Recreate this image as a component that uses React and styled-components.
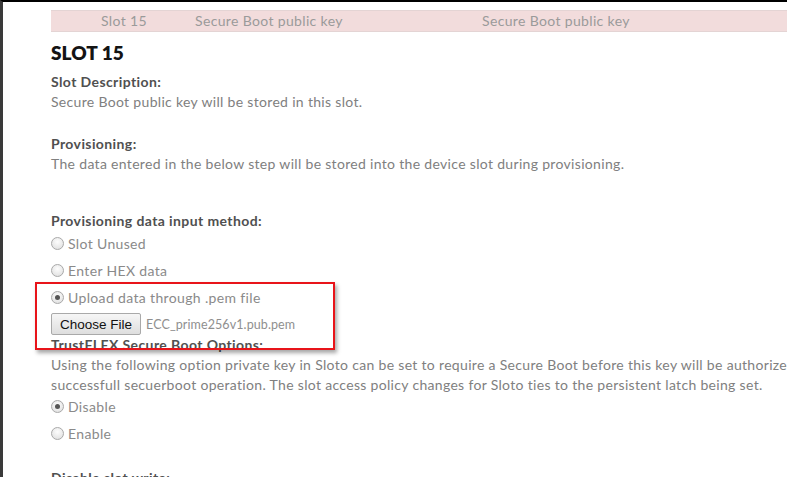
import React from "react"
import styled, { createGlobalStyle } from "styled-components"

const GlobalStyle = createGlobalStyle`
  html, body {
    margin: 0;
    padding: 0;
    background: #fff;
    overflow: hidden;
  }
  body {
    font-family: "Lato", "Open Sans", sans-serif;
  }
`

const Frame = styled.div`
  position: relative;
  height: 477px;
  box-sizing: border-box;
  border-top: 2px solid #000;
  border-left: 3px solid #3a3a3a;
  overflow: hidden;
`

const Content = styled.div`
  width: 900px;
  padding-left: 48px;
`

const SlotRow = styled.div`
  display: grid;
  grid-template-columns: 50px 94px 287px 1fr;
  height: 20px;
  margin-top: 8px;
  background: #f2dcdc;
  border-top: 1px solid #e4d4d4;
  border-bottom: 1px solid #e4d4d4;
  color: #9a9a9a;
  font-size: 14px;
  letter-spacing: 0.35px;
  line-height: 20px;
`

const Cell = styled.div`
  white-space: nowrap;
`

const Heading = styled.h2`
  margin: 9px 0 0;
  font-size: 19px;
  font-weight: 800;
  color: #141414;
  line-height: 24px;
`

const Label = styled.div`
  margin-top: ${p => p.$gap || 0}px;
  font-size: 14px;
  font-weight: 700;
  letter-spacing: 0.4px;
  color: #505050;
  line-height: 20px;
`

const Text = styled.p`
  margin: 0;
  font-size: 14px;
  letter-spacing: 0.32px;
  color: #808080;
  line-height: 20px;
`

const RadioGroup = styled.div`
  margin-top: ${p => p.$gap || 0}px;
`

const RadioRow = styled.label`
  display: flex;
  align-items: center;
  gap: 4px;
  height: 27px;
  font-size: 14px;
  letter-spacing: 0.35px;
  color: #8a8a8a;
`

const Radio = styled.span`
  width: 11px;
  height: 11px;
  border-radius: 50%;
  border: 1px solid #a9a9a9;
  background: radial-gradient(circle at 50% 35%, #fdfdfd 0%, #dcdcdc 100%);
  display: flex;
  align-items: center;
  justify-content: center;

  &::after {
    content: "";
    width: 5px;
    height: 5px;
    border-radius: 50%;
    background: ${p => (p.$checked ? "#555" : "transparent")};
  }
`

const FileRow = styled.div`
  display: flex;
  align-items: center;
  gap: 5px;
  height: 22px;
  margin-top: 2px;
`

const FileButton = styled.button`
  height: 22px;
  padding: 0 8px;
  font-family: "Liberation Sans", Arial, sans-serif;
  font-size: 13.5px;
  color: #111;
  background: linear-gradient(#f6f6f6, #dedede);
  border: 1px solid #a9a9a9;
  border-radius: 2px;
`

const FileName = styled.span`
  font-size: 12.5px;
  letter-spacing: 0.1px;
  color: #8f8f8f;
`

const Highlight = styled.div`
  position: absolute;
  left: 32px;
  top: 280px;
  width: 296px;
  height: 64px;
  border: 2px solid #e8141a;
  box-shadow: 2px 3px 4px rgba(0, 0, 0, 0.35);
  pointer-events: none;
`

export default function App() {
  return (
    <>
      <GlobalStyle />
      <Frame>
        <Content>
          <SlotRow>
            <Cell />
            <Cell>Slot 15</Cell>
            <Cell>Secure Boot public key</Cell>
            <Cell>Secure Boot public key</Cell>
          </SlotRow>
          <Heading>SLOT 15</Heading>
          <Label $gap={7}>Slot Description:</Label>
          <Text>Secure Boot public key will be stored in this slot.</Text>
          <Label $gap={22}>Provisioning:</Label>
          <Text>
            The data entered in the below step will be stored into the device slot during provisioning.
          </Text>
          <Label $gap={37}>Provisioning data input method:</Label>
          <RadioGroup $gap={-1}>
            <RadioRow>
              <Radio />
              Slot Unused
            </RadioRow>
            <RadioRow>
              <Radio />
              Enter HEX data
            </RadioRow>
            <RadioRow>
              <Radio $checked />
              Upload data through .pem file
            </RadioRow>
          </RadioGroup>
          <FileRow>
            <FileButton>Choose File</FileButton>
            <FileName>ECC_prime256v1.pub.pem</FileName>
          </FileRow>
          <Label>TrustFLEX Secure Boot Options:</Label>
          <Text>
            Using the following option private key in Sloto can be set to require a Secure Boot before this key will be authorized
            <br />
            successfull secuerboot operation. The slot access policy changes for Sloto ties to the persistent latch being set.
          </Text>
          <RadioGroup $gap={-2}>
            <RadioRow>
              <Radio $checked />
              Disable
            </RadioRow>
            <RadioRow>
              <Radio />
              Enable
            </RadioRow>
          </RadioGroup>
          <Label $gap={21}>Disable slot write:</Label>
        </Content>
        <Highlight />
      </Frame>
    </>
  )
}
